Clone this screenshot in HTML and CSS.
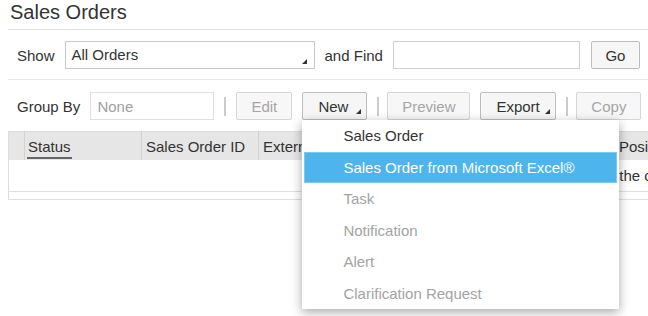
FILE: index.html
```html
<!DOCTYPE html>
<html>
<head>
  <title>Sales Orders</title>
  <link rel="stylesheet" href="styles.css">
</head>
<body>

  <!-- Page header -->
  <h1 class="page-title">Sales Orders</h1>

  <!-- Filter bar -->
  <div class="toolbar filter-bar">
    <span class="label">Show</span>
    <div class="select">All Orders<span class="corner"></span></div>
    <span class="label">and Find</span>
    <input type="text" class="find-input">
    <button class="btn btn-go">Go</button>
  </div>

  <!-- Action bar -->
  <div class="toolbar action-bar">
    <span class="label">Group By</span>
    <input type="text" class="group-input" value="None" disabled>
    <span class="divider"></span>
    <button class="btn btn-edit" disabled>Edit</button>
    <div class="menu-wrap">
      <button class="btn menu-btn btn-new">New<span class="corner"></span></button>
      <ul class="menu">
        <li>Sales Order</li>
        <li class="active">Sales Order from Microsoft Excel®</li>
        <li class="disabled">Task</li>
        <li class="disabled">Notification</li>
        <li class="disabled">Alert</li>
        <li class="disabled">Clarification Request</li>
      </ul>
    </div>
    <span class="divider"></span>
    <button class="btn btn-preview" disabled>Preview</button>
    <button class="btn menu-btn btn-export">Export<span class="corner"></span></button>
    <span class="divider"></span>
    <button class="btn btn-copy" disabled>Copy</button>
  </div>

  <!-- Orders table -->
  <div class="table-wrap">
    <table class="orders">
      <colgroup>
        <col class="col-sel">
        <col class="col-status">
        <col class="col-id">
        <col class="col-ext">
        <col class="col-pos">
      </colgroup>
      <thead>
        <tr>
          <th></th>
          <th><span class="sorted">Status</span></th>
          <th>Sales Order ID</th>
          <th>External Reference</th>
          <th>Position</th>
        </tr>
      </thead>
      <tbody>
        <tr class="empty-row">
          <td colspan="5"><span class="no-data">No sales orders match the criteria entered.</span></td>
        </tr>
        <tr class="spacer-row">
          <td colspan="5"></td>
        </tr>
      </tbody>
    </table>
  </div>

</body>
</html>
```

FILE: styles.css
```css
body {
  margin: 0 0 0 8px;
  min-height: 316px;
  font-family: "Liberation Sans", Arial, sans-serif;
  font-size: 15px;
  color: #333333;
  background-color: #ffffff;
}

/* Page title */
.page-title {
  margin: 0;
  font-size: 20px;
  font-weight: normal;
  line-height: 24px;
  padding: 0 0 5px 2px;
  border-bottom: 1px solid #e2e2e2;
  color: #333333;
}

/* Toolbars */
.toolbar {
  display: flex;
  align-items: center;
  gap: 10px;
  padding-left: 9px;
  border-bottom: 1px solid #e8e8e8;
}

.filter-bar {
  padding-top: 11px;
  padding-bottom: 10px;
}

.action-bar {
  position: relative;
  z-index: 5;
  padding-top: 12px;
  padding-bottom: 11px;
  border-bottom: none;
}

.label {
  white-space: nowrap;
}

.select {
  position: relative;
  box-sizing: border-box;
  width: 250px;
  height: 28px;
  line-height: 26px;
  padding-left: 6px;
  border: 1px solid #c9c9c9;
  background-color: #ffffff;
}

.corner {
  position: absolute;
  width: 0;
  height: 0;
  border-style: solid;
  border-width: 0 0 5px 5px;
  border-color: transparent transparent #333333 transparent;
}

.select .corner {
  right: 7px;
  bottom: 4px;
}

.find-input,
.group-input {
  box-sizing: border-box;
  height: 28px;
  padding: 0 6px;
  font-family: inherit;
  font-size: 15px;
  border: 1px solid #cfcfcf;
  background-color: #ffffff;
  color: #333333;
  outline: none;
}

.find-input {
  width: 187px;
}

.group-input {
  width: 124px;
  color: #a0a0a0;
  border-color: #e0e0e0;
}

.btn {
  position: relative;
  box-sizing: border-box;
  height: 28px;
  padding: 0 15px;
  font-family: inherit;
  font-size: 15px;
  color: #333333;
  background-color: #f6f6f6;
  border: 1px solid #bdbdbd;
  border-radius: 2px;
  cursor: pointer;
}

.btn:disabled {
  color: #a6a6a6;
  border-color: #d6d6d6;
  background-color: #f7f7f7;
  cursor: default;
}

.btn-go {
  width: 49px;
  padding: 0;
  margin-left: 1px;
}

.btn-edit {
  width: 56px;
  padding: 0;
}

.btn-preview {
  width: 83px;
  padding: 0;
  margin-left: -2px;
}

.btn-copy {
  width: 65px;
  padding: 0;
  margin-left: -2px;
}

.menu-btn {
  padding: 0 20px 0 15px;
  text-align: left;
}

.btn-new {
  width: 65px;
}

.btn-export {
  width: 76px;
}

.menu-btn .corner {
  right: 5px;
  bottom: 5px;
}

.divider {
  width: 2px;
  height: 19px;
  background-color: #cccccc;
}

/* Dropdown menu */
.menu-wrap {
  position: relative;
}

.menu {
  position: absolute;
  top: 100%;
  left: 0;
  z-index: 10;
  box-sizing: border-box;
  width: 317px;
  margin: 0;
  padding: 0;
  list-style: none;
  background-color: #ffffff;
  box-shadow: 0 3px 10px rgba(0, 0, 0, 0.35);
}

.menu li {
  height: 31.5px;
  line-height: 31.5px;
  margin: 0 2px;
  padding-left: 39px;
  white-space: nowrap;
  color: #333333;
}

.menu li.active {
  box-sizing: border-box;
  background-color: #4eb4ec;
  border: 1px solid #7cc8f2;
  line-height: 29.5px;
  padding-left: 38px;
  color: #ffffff;
}

.menu li.disabled {
  color: #a3a3a3;
}

/* Table */
.table-wrap {
  overflow: hidden;
}

.orders {
  width: 900px;
  table-layout: fixed;
  border-collapse: collapse;
  border-left: 1px solid #dddddd;
}

.col-sel { width: 16px; }
.col-status { width: 117px; }
.col-id { width: 117px; }
.col-ext { width: 356px; }

.orders th {
  height: 28px;
  padding: 0 0 0 4px;
  text-align: left;
  font-weight: normal;
  white-space: nowrap;
  overflow: hidden;
  background-color: #e6e6e6;
  border-top: 1px solid #dcdcdc;
  border-right: 1px solid #d2d2d2;
}

.sorted {
  display: inline-block;
  border-bottom: 2px solid #666666;
  line-height: 20px;
  padding: 0 1px;
  margin-left: -2px;
  margin-top: 3px;
}

.empty-row td {
  height: 31px;
  padding: 0;
  border-bottom: 1px solid #e0e0e0;
  white-space: nowrap;
}

.no-data {
  padding-left: 456px;
}

.spacer-row td {
  height: 7px;
  padding: 0;
  border-bottom: 1px solid #e0e0e0;
}
```
